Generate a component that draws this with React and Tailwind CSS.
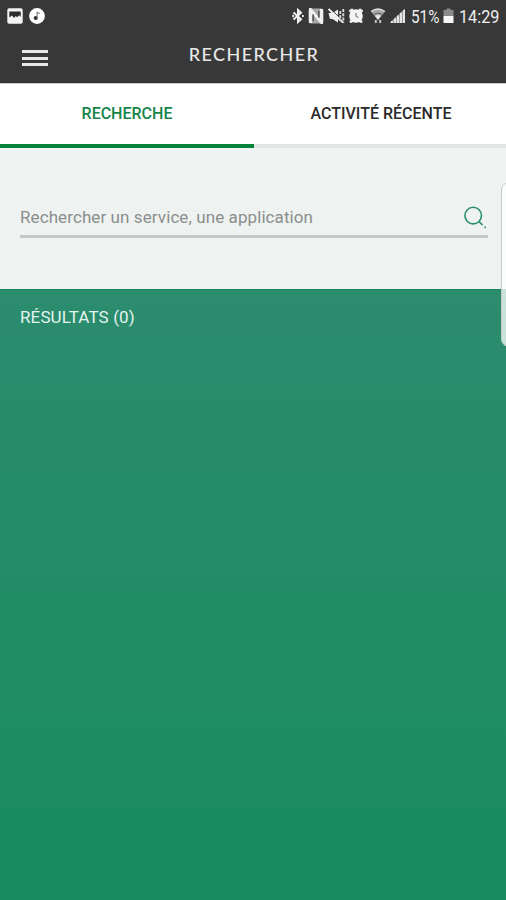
import React, { useState } from "react";

const BluetoothIcon = () => (
  <svg width="12" height="16" viewBox="0 0 12 16" fill="none" stroke="#f0f0f0" strokeWidth="2">
    <path d="M1.5 4.5L9 11.3L6 14V2L9 4.7L1.5 11.5" />
    <path d="M0.2 8H2M10 8H11.8" />
  </svg>
);

const NfcIcon = () => (
  <svg width="16" height="16" viewBox="0 0 16 16" fill="none">
    <rect x="0.5" y="0.5" width="15" height="15" rx="2.5" fill="#a8a8a8" />
    <path d="M2.5 15V1.5L13.5 14.5V1" stroke="#f0f0f0" strokeWidth="3" />
    <path d="M5.2 13V6.5M10.8 9.5V3" stroke="#4a4a4a" strokeWidth="1.3" />
  </svg>
);

const MuteIcon = () => (
  <svg width="17" height="16" viewBox="0 0 17 16" fill="none">
    <path d="M0.5 5H4.5L10 1.5V14.5L4.5 11H2Z" fill="#f0f0f0" />
    <path d="M2.5 1L15 12.5" stroke="#383838" strokeWidth="1" />
    <path d="M0.5 1L15 14.5" stroke="#f0f0f0" strokeWidth="1.8" />
    <path d="M12.3 3V13M15.3 1V15" stroke="#d8d8d8" strokeWidth="1.9" strokeDasharray="3 1.3" />
  </svg>
);

const AlarmIcon = () => (
  <svg width="16" height="16" viewBox="0 0 16 16" fill="none">
    <path d="M2.5 3L4 2M13.5 3L12 2M3 13.5L4 13M13 13.5L12 13" stroke="#e8e8e8" strokeWidth="3" strokeLinecap="round" />
    <circle cx="8" cy="8" r="6.8" fill="#f4f4f4" />
    <path d="M8 5V8L10.3 9.7" stroke="#888" strokeWidth="1.3" />
  </svg>
);

const WifiIcon = () => (
  <svg width="16" height="16" viewBox="0 0 16 16" fill="none">
    <path d="M1 3.5Q8 -1.5 15 3.5L8 12Z" fill="#a9a9a9" />
    <path d="M1 3.5Q8 -1.5 15 3.5" stroke="#e0e0e0" strokeWidth="1.3" />
    <path d="M4 6.5Q8 3.7 12 6.5" stroke="#6a6a6a" strokeWidth="1.2" />
    <path d="M5 8Q8 6 11 8L8 12Z" fill="#e6e6e6" />
    <path d="M5.8 12V15M10.2 12V15" stroke="#c4c4c4" strokeWidth="2" />
  </svg>
);

const SignalIcon = () => (
  <svg width="17" height="16" viewBox="0 0 17 16" fill="none">
    <path d="M0.5 15L16 0.5V15Z" fill="#989898" />
    <path d="M3 15V13M6 15V10.3M9 15V7.5M12 15V4.7M15 15V2" stroke="#eeeeee" strokeWidth="1.8" />
  </svg>
);

const BatteryIcon = () => (
  <svg width="11" height="16" viewBox="0 0 11 16">
    <path d="M3.5 0.5H7.5V2H10.5V8H0.5V2H3.5Z" fill="#8a8a8a" />
    <path d="M0.5 8H10.5V15H0.5Z" fill="#f7f7f7" />
  </svg>
);

const PictureIcon = () => (
  <svg width="16" height="16" viewBox="0 0 16 16">
    <rect x="0.3" y="0.3" width="15.4" height="15.4" rx="1.8" fill="#f4f4f4" />
    <path d="M2.3 3.5H13.7V9L12.2 7.3L10.2 9.2L8.8 8L7 10L5 7.6L2.3 9.5Z" fill="#2c2c2c" />
  </svg>
);

const MusicIcon = () => (
  <svg width="16" height="16" viewBox="0 0 16 16">
    <circle cx="8" cy="8" r="7.9" fill="#fff" />
    <circle cx="6.7" cy="10" r="2" fill="#2c2c2c" />
    <path d="M8.1 10V4.3L10.8 5.5" stroke="#777" strokeWidth="1.1" fill="none" />
  </svg>
);

const SearchIcon = () => (
  <svg width="24" height="24" viewBox="0 0 24 24" fill="none" stroke="#2a9069" strokeWidth="1.6">
    <circle cx="9.2" cy="9.6" r="8.3" />
    <path d="M15 15.5L18.6 19.1" />
    <path d="M20.4 21.4H22" />
  </svg>
);

const StatusBar = () => (
  <div className="flex h-8 items-center justify-between pl-[7px] pr-[6px] text-[18px] leading-none text-[#eeeeee]">
    <div className="flex gap-[6px]">
      <PictureIcon />
      <MusicIcon />
    </div>
    <div className="flex items-center">
      <div className="flex items-center">
        <BluetoothIcon />
        <div className="ml-[4px]"><NfcIcon /></div>
        <div className="ml-[4px]"><MuteIcon /></div>
        <div className="ml-[3px]"><AlarmIcon /></div>
        <div className="ml-[6px]"><WifiIcon /></div>
        <div className="ml-[3px]"><SignalIcon /></div>
      </div>
      <div className="ml-[5px] w-[30px] pt-px">
        <span className="inline-block origin-left scale-x-[0.85]">51%</span>
      </div>
      <div className="ml-[2px]"><BatteryIcon /></div>
      <div className="ml-[5px] w-[41px] pt-px">
        <span className="inline-block origin-left scale-x-[0.9]">14:29</span>
      </div>
    </div>
  </div>
);

const tabs = ["RECHERCHE", "ACTIVITÉ RÉCENTE"];

const App = () => {
  const [active, setActive] = useState(0);
  const [query, setQuery] = useState("");

  return (
    <div className="relative flex h-[900px] w-[506px] flex-col overflow-hidden bg-[#eef2f1] font-['Roboto',sans-serif]">
      <header className="h-[83px] border-b border-[#2d2d2d] bg-[#383838]">
        <StatusBar />
        <div className="grid h-[50px] grid-cols-[48px_1fr_46px] items-start">
          <button type="button" aria-label="Menu" className="ml-[22px] mt-[18px] flex w-[26px] flex-col gap-[3.5px]">
            <span className="h-[3px] w-full bg-[#e9e9e9]" />
            <span className="h-[3px] w-full bg-[#e9e9e9]" />
            <span className="h-[3px] w-full bg-[#e9e9e9]" />
          </button>
          <h1 className="mt-[12px] text-center font-['Lato',sans-serif] text-[18px] font-medium leading-5 tracking-[1.4px] text-[#e8e8e8]">
            RECHERCHER
          </h1>
        </div>
      </header>

      <nav className="grid h-[65px] grid-cols-[254px_252px] border-t border-[#d0d0d0] bg-white">
        {tabs.map((tab, i) => (
          <button
            key={tab}
            type="button"
            onClick={() => setActive(i)}
            className={
              i === active
                ? "border-b-4 border-[#06823a] pb-px text-[16px] font-medium text-[#16854a]"
                : "border-b-4 border-[#e2e5e4] pb-px pl-[2px] text-[16px] font-medium text-[#2b2b2b]"
            }
          >
            {tab}
          </button>
        ))}
      </nav>

      <section className="h-[141px] pl-5 pr-[18px] pt-[50px]">
        <div className="flex h-[40px] items-center border-b-3 border-[#c3c7c6]">
          <input
            value={query}
            onChange={(e) => setQuery(e.target.value)}
            placeholder="Rechercher un service, une application"
            className="min-w-0 flex-1 pt-[2px] text-[17px] tracking-[0.09px] text-[#555] outline-none placeholder:text-[#8b8e8d]"
          />
          <div className="pt-[3px]">
            <SearchIcon />
          </div>
        </div>
      </section>

      <section className="flex-1 border-t border-[#158560] bg-linear-to-b from-[#2b8c6e] to-[#178c60] pl-5 pt-[17px]">
        <h2 className="text-[17px] leading-5 tracking-[0.12px] text-[#e6f4ee]">RÉSULTATS (0)</h2>
      </section>

      {/* edge panel handle */}
      <div className="absolute left-[501px] top-[182px] h-[165px] w-4 rounded-lg border border-[#c5c9c8] bg-white/75" />
    </div>
  );
};

export default App;
